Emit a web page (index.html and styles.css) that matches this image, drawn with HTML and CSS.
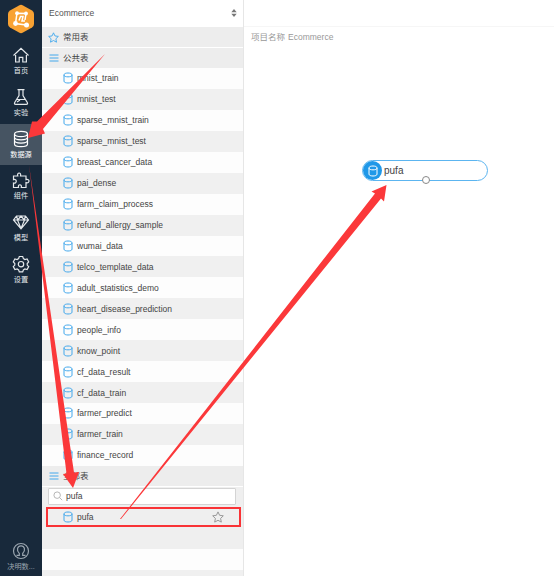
FILE: index.html
```html
<!DOCTYPE html>
<html lang="zh">
<head>
<meta charset="utf-8">
<title>Ecommerce</title>
<link rel="stylesheet" href="styles.css">
</head>
<body>
<svg class="defs" aria-hidden="true">
  <symbol id="db" viewBox="0 0 10 12"><path d="M1 2.8C1 .4 9 .4 9 2.8v6.4c0 2.4-8 2.4-8 0zM1 3.2c0 2.2 8 2.2 8 0"/></symbol>
  <symbol id="star" viewBox="0 0 12 12"><path d="M6 .9l1.6 3.4 3.7.5-2.7 2.6.7 3.7L6 9.3l-3.3 1.8.7-3.7L.7 4.8l3.7-.5z"/></symbol>
  <symbol id="bars" viewBox="0 0 10 10"><path d="M.5 2h9M.5 5h9M.5 8h9"/></symbol>
</svg>
<div class="app">
  <nav class="nav">
    <svg class="logo" viewBox="0 0 28 30"><path class="hex" d="M12 1.4q2-1.1 4 0l9 5.1q2 1.2 2 3.5v10q0 2.300-2 3.500l-9 5.100q-2 1.100-4 0l-9-5.100q-2-1.200-2-3.500V10q0-2.300 2-3.500z"/><path class="net" d="M10 9.200L19 9.500 18 16M10 9.200L8.500 19.500 19 21M12 16.500L13.500 12.500H16L15 17H18"/><g class="dots"><circle cx="10" cy="9.200" r="1.900"/><circle cx="19" cy="9.500" r="1.900"/><circle cx="8.500" cy="19.500" r="2.400"/><circle cx="19.500" cy="21" r="2.500"/></g></svg>
    <a class="item"><svg viewBox="0 0 18 18"><path d="M1.500 9.500L9 2.300l7.500 7.200M3.600 9v7h3.600v-4.600h3.600V16h3.600V9"/></svg><span>首页</span></a>
    <a class="item"><svg viewBox="0 0 18 18"><path d="M5.500 1.700h7M7 2v5.500L2.700 14.500q-.8 1.800 1 1.800h10.600q1.800 0 1-1.800L11 7.500V2M5 11.500h8M5 14l3-2"/></svg><span>实验</span></a>
    <a class="item active"><svg viewBox="0 0 18 18"><path d="M2.500 4c0-3.500 13-3.500 13 0s-13 3.500-13 0v10c0 3.500 13 3.500 13 0V4M2.500 7.300c0 3.300 13 3.300 13 0M2.500 10.600c0 3.300 13 3.300 13 0"/></svg><span>数据源</span></a>
    <a class="item"><svg viewBox="0 0 18 18"><path d="M1.500 5h4.300C4.500 1 9.700 1 8.500 5H14v3.600c4-1.200 4 4.200 0 3V16.500H9.300c1-3.700-3.800-3.700-2.800 0h-5V12c3.700 1 3.700-4.400 0-3.400z"/></svg><span>组件</span></a>
    <a class="item"><svg viewBox="0 0 18 18"><path d="M4.500 3h9l3 4L9 15.800 1.500 7zM1.500 7h15M5.500 7L9 15.500 12.500 7M4.500 3l1.200 4L9 3l3.300 4 1.200-4"/></svg><span>模型</span></a>
    <a class="item"><svg viewBox="0 0 18 18"><path d="M7.300 1.500h3.400l.7 2.100 1.500.9 2.200-.5 1.600 2.900L15.200 8.500v1.600l1.500 1.500-1.600 2.900-2.200-.5-1.500.9-.7 2h-3.400l-.7-2-1.500-.9-2.200.5-1.600-2.900 1.500-1.500V8.500L1.300 6.900 2.900 4l2.200.5 1.500-.9z"/><circle cx="9" cy="9.200" r="2.700"/></svg><span>设置</span></a>
    <a class="item user"><svg viewBox="0 0 18 18"><circle cx="9" cy="9" r="7.500"/><path d="M4.500 13.300h2.800v-2C4 8 5.500 3.800 9 3.800s5 4.200 1.700 7.500v2h2.800"/></svg><span>决明数...</span></a>
  </nav>
  <aside class="panel">
    <header class="project"><span>Ecommerce</span><svg viewBox="0 0 6 8"><path d="M3 0l2.700 3.300H.3zM3 8L.3 4.700h5.400z"/></svg></header>
    <h2 class="group"><svg class="ico star"><use href="#star"/></svg>常用表</h2>
    <h2 class="group"><svg class="ico bars"><use href="#bars"/></svg>公共表</h2>
    <ul class="tables">
      <li><svg class="ico db"><use href="#db"/></svg>mnist_train</li>
      <li><svg class="ico db"><use href="#db"/></svg>mnist_test</li>
      <li><svg class="ico db"><use href="#db"/></svg>sparse_mnist_train</li>
      <li><svg class="ico db"><use href="#db"/></svg>sparse_mnist_test</li>
      <li><svg class="ico db"><use href="#db"/></svg>breast_cancer_data</li>
      <li><svg class="ico db"><use href="#db"/></svg>pai_dense</li>
      <li><svg class="ico db"><use href="#db"/></svg>farm_claim_process</li>
      <li><svg class="ico db"><use href="#db"/></svg>refund_allergy_sample</li>
      <li><svg class="ico db"><use href="#db"/></svg>wumai_data</li>
      <li><svg class="ico db"><use href="#db"/></svg>telco_template_data</li>
      <li><svg class="ico db"><use href="#db"/></svg>adult_statistics_demo</li>
      <li><svg class="ico db"><use href="#db"/></svg>heart_disease_prediction</li>
      <li><svg class="ico db"><use href="#db"/></svg>people_info</li>
      <li><svg class="ico db"><use href="#db"/></svg>know_point</li>
      <li><svg class="ico db"><use href="#db"/></svg>cf_data_result</li>
      <li><svg class="ico db"><use href="#db"/></svg>cf_data_train</li>
      <li><svg class="ico db"><use href="#db"/></svg>farmer_predict</li>
      <li><svg class="ico db"><use href="#db"/></svg>farmer_train</li>
      <li><svg class="ico db"><use href="#db"/></svg>finance_record</li>
    </ul>
    <h2 class="group"><svg class="ico bars"><use href="#bars"/></svg>全部表</h2>
    <section class="results">
      <div class="search"><svg viewBox="0 0 12 12"><circle cx="5" cy="5" r="3.900"/><path d="M8 8l3 3"/></svg>pufa</div>
      <div class="match"><svg class="ico db"><use href="#db"/></svg>pufa<svg class="ico fav"><use href="#star"/></svg></div>
    </section>
    <div class="blank"></div>
    <div class="rest"></div>
  </aside>
  <main class="canvas">
    <div class="toolbar"></div>
    <p class="name"><span>项目名称</span><span>Ecommerce</span></p>
    <div class="node"><span class="badge"><svg class="ico db"><use href="#db"/></svg></span>pufa<i class="port"></i></div>
  </main>
</div>
<svg class="arrows" viewBox="0 0 554 576">
  <path d="M105 54L43 129 45 133.500 28 138 32 121.500 37 121.500z"/>
  <path d="M29 165L74 472.500 79 472 73 488 63 474 66.500 473.500z"/>
  <path d="M120 519L375 193.500 371.500 191.500 386.500 185 384 201.500 381 198.500 121 519z"/>
</svg>
</body>
</html>
```
FILE: styles.css
```css
* { box-sizing: border-box; }
body { margin: 0; overflow: hidden; font: 8.5px/12px "Liberation Sans", "Noto Sans CJK SC", sans-serif; color: #444; background: #fff; }
svg { display: block; fill: none; flex: none; }
.defs { position: absolute; width: 0; height: 0; }
.app { display: flex; width: 554px; height: 576px; }

.nav { width: 42px; background: #18293b; display: flex; flex-direction: column; align-items: center; padding-top: 4px; }
.logo { width: 28px; height: 30px; margin-bottom: 6px; }
.hex { fill: #f8a233; }
.net { stroke: #fff; stroke-width: 1.5; }
.dots { fill: #fff; }
.item { width: 42px; height: 41.8px; padding-top: 6px; display: flex; flex-direction: column; align-items: center; color: #e4e8eb; font-size: 7.2px; line-height: 10px; white-space: nowrap; }
.item svg { width: 18px; height: 18px; stroke: currentColor; stroke-width: 1.2; margin-bottom: 2px; }
.active { background: #465462; color: #fff; }
.user { margin-top: auto; height: 42px; color: #9aa5af; padding-top: 8px; }
.user svg { margin-bottom: 2px; }

.panel { width: 202px; border-right: 1px solid #e6e6e6; display: flex; flex-direction: column; }
.project { height: 27px; padding: 0 6px 2px 7px; display: flex; align-items: center; justify-content: space-between; color: #555; flex: none; }
.project svg { width: 6px; height: 8px; fill: #777; }
.group { height: 21px; margin: 0; padding-left: 6px; display: flex; align-items: center; font-size: 8.5px; font-weight: 400; background: #ededed; border-bottom: 1px solid #fff; flex: none; }
.group + .tables { margin-top: -1px; }
.ico { stroke: #43a8ec; stroke-width: 1; }
.star { width: 11px; height: 11px; margin-right: 4px; }
.bars { width: 10px; height: 10px; margin: 0 4px 0 1px; }
.db { width: 10px; height: 12px; margin-right: 4px; }
.tables { list-style: none; margin: 0; padding: 0; flex: none; }
.tables li { height: 20.95px; padding-left: 21px; display: flex; align-items: center; background: #fdfdfd; }
.tables li:nth-child(even) { background: #f0f0f0; }
.results { height: 62px; background: #efefef; padding: 1px 2px 0 4px; flex: none; }
.search { width: 188px; height: 17px; margin-left: 2px; border: 1px solid #d4d4d4; border-radius: 1px; background: #fff; display: flex; align-items: center; padding-left: 4px; }
.search svg { width: 10px; height: 10px; stroke: #aaa; margin-right: 3px; }
.match { width: 195px; height: 20px; margin-top: 2px; border: 2px solid #f93336; display: flex; align-items: center; padding: 0 15px 0 15px; }
.fav { width: 12px; height: 12px; margin-left: auto; stroke: #999; }
.blank { height: 21px; background: #fdfdfd; flex: none; }
.rest { flex: 1; background: #f0f0f0; }

.canvas { flex: 1; }
.toolbar { height: 27px; border-bottom: 1px solid #f6f6f6; }
.name { margin: 4px 0 0 7px; color: #999; display: flex; gap: 3px; }
.node { position: relative; width: 126px; height: 21px; margin: 117px 0 0 118px; border: 1px solid #5cb5f0; border-radius: 11px; display: flex; align-items: center; font-size: 10px; background: #fff; }
.badge { width: 19px; height: 19px; margin-right: 2px; border-radius: 50%; background: #1f98e8; display: flex; align-items: center; justify-content: center; }
.badge .db { stroke: #fff; margin: 0; }
.port { position: absolute; left: 59px; top: 15px; width: 8px; height: 8px; border: 1px solid #888; border-radius: 50%; background: #fff; }
.arrows { position: absolute; left: 0; top: 0; width: 554px; height: 576px; fill: #fb383a; pointer-events: none; }
```
